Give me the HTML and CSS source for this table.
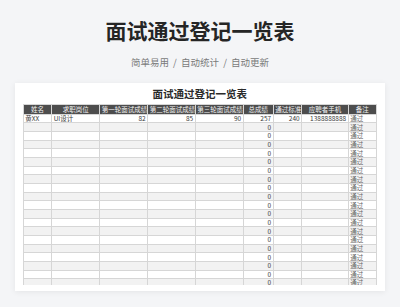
FILE: index.html
```html
<!DOCTYPE html>
<html lang="zh">
<head>
<meta charset="utf-8">
<title>面试通过登记一览表</title>
<link rel="stylesheet" href="styles.css">
</head>
<body>
<header class="hero">
  <h1 class="hero-title">面试通过登记一览表</h1>
  <p class="hero-sub"><span class="tag">简单易用</span><span class="sep">/</span><span class="tag">自动统计</span><span class="sep">/</span><span class="tag">自动更新</span></p>
</header>
<main class="card">
  <h2 class="card-title">面试通过登记一览表</h2>
  <div class="sheet">
    <table class="grid">
      <colgroup>
        <col class="c-name"><col class="c-job"><col class="c-s1"><col class="c-s2"><col class="c-s3"><col class="c-total"><col class="c-pass"><col class="c-phone"><col class="c-note">
      </colgroup>
      <thead>
        <tr><th>姓名</th><th>求职岗位</th><th>第一轮面试成绩</th><th>第二轮面试成绩</th><th>第三轮面试成绩</th><th>总成绩</th><th>通过标准</th><th>应聘者手机</th><th>备注</th></tr>
      </thead>
      <tbody>
        <tr><td>黄XX</td><td>UI设计</td><td class="num">82</td><td class="num">85</td><td class="num">90</td><td class="num">257</td><td class="num">240</td><td class="num">1388888888</td><td class="note">通过</td></tr>
        <tr><td></td><td></td><td></td><td></td><td></td><td class="num">0</td><td></td><td></td><td class="note">通过</td></tr>
        <tr><td></td><td></td><td></td><td></td><td></td><td class="num">0</td><td></td><td></td><td class="note">通过</td></tr>
        <tr><td></td><td></td><td></td><td></td><td></td><td class="num">0</td><td></td><td></td><td class="note">通过</td></tr>
        <tr><td></td><td></td><td></td><td></td><td></td><td class="num">0</td><td></td><td></td><td class="note">通过</td></tr>
        <tr><td></td><td></td><td></td><td></td><td></td><td class="num">0</td><td></td><td></td><td class="note">通过</td></tr>
        <tr><td></td><td></td><td></td><td></td><td></td><td class="num">0</td><td></td><td></td><td class="note">通过</td></tr>
        <tr><td></td><td></td><td></td><td></td><td></td><td class="num">0</td><td></td><td></td><td class="note">通过</td></tr>
        <tr><td></td><td></td><td></td><td></td><td></td><td class="num">0</td><td></td><td></td><td class="note">通过</td></tr>
        <tr><td></td><td></td><td></td><td></td><td></td><td class="num">0</td><td></td><td></td><td class="note">通过</td></tr>
        <tr><td></td><td></td><td></td><td></td><td></td><td class="num">0</td><td></td><td></td><td class="note">通过</td></tr>
        <tr><td></td><td></td><td></td><td></td><td></td><td class="num">0</td><td></td><td></td><td class="note">通过</td></tr>
        <tr><td></td><td></td><td></td><td></td><td></td><td class="num">0</td><td></td><td></td><td class="note">通过</td></tr>
        <tr><td></td><td></td><td></td><td></td><td></td><td class="num">0</td><td></td><td></td><td class="note">通过</td></tr>
        <tr><td></td><td></td><td></td><td></td><td></td><td class="num">0</td><td></td><td></td><td class="note">通过</td></tr>
        <tr><td></td><td></td><td></td><td></td><td></td><td class="num">0</td><td></td><td></td><td class="note">通过</td></tr>
        <tr><td></td><td></td><td></td><td></td><td></td><td class="num">0</td><td></td><td></td><td class="note">通过</td></tr>
        <tr><td></td><td></td><td></td><td></td><td></td><td class="num">0</td><td></td><td></td><td class="note">通过</td></tr>
        <tr><td></td><td></td><td></td><td></td><td></td><td class="num">0</td><td></td><td></td><td class="note">通过</td></tr>
        <tr><td></td><td></td><td></td><td></td><td></td><td class="num">0</td><td></td><td></td><td class="note">通过</td></tr>
      </tbody>
    </table>
  </div>
</main>
</body>
</html>
```

FILE: styles.css
```css
* { box-sizing: border-box; }

html, body {
  margin: 0;
  padding: 0;
}

body {
  width: 400px;
  height: 307px;
  overflow: hidden;
  background: #f4f5f7;
  font-family: "Noto Sans CJK SC", "Noto Sans", sans-serif;
  color: #333;
}

.hero {
  padding-top: 16px;
  text-align: center;
}

.hero-title {
  margin: 0;
  font-size: 21px;
  line-height: 28px;
  font-weight: 700;
  color: #252525;
}

.hero-sub {
  margin: 11px 0 0;
  display: flex;
  justify-content: center;
  font-size: 9.5px;
  line-height: 14px;
  color: #7a7a7a;
}

.sep {
  width: 12px;
  text-align: center;
}

.card {
  margin: 14px 15px 0;
  height: 208px;
  padding: 5px 8px 6px 7.7px;
  background: #ffffff;
  box-shadow: 0 1px 6px rgba(0, 0, 0, 0.07);
}

.card-title {
  margin: 0 0 4px;
  font-size: 10.5px;
  line-height: 12px;
  font-weight: 700;
  text-align: center;
  color: #2a2a2a;
}

.sheet {
  height: 181px;
  overflow: hidden;
}

.grid {
  width: 353.3px;
  table-layout: fixed;
  border-collapse: collapse;
  font-size: 6.5px;
}

.c-name { width: 28.5px; }
.c-job { width: 48px; }
.c-s1 { width: 48px; }
.c-s2 { width: 47.5px; }
.c-s3 { width: 48px; }
.c-total { width: 30px; }
.c-pass { width: 28.5px; }
.c-phone { width: 46.5px; }
.c-note { width: 28.3px; }

.grid th,
.grid td {
  border: 1px solid #d6d6d6;
  padding: 0 1.5px;
  white-space: nowrap;
  overflow: hidden;
  line-height: 7px;
}

.grid th {
  height: 9.7px;
  background: #4d4d4d;
  color: #f2f2f2;
  font-weight: 400;
  text-align: center;
}

.grid td {
  height: 8.67px;
  text-align: left;
  color: #3a3a3a;
}

.grid tbody tr:nth-child(even) td {
  background: #f2f2f2;
}

.grid td.num {
  text-align: right;
}

.grid td.note {
  color: #666;
}
```
